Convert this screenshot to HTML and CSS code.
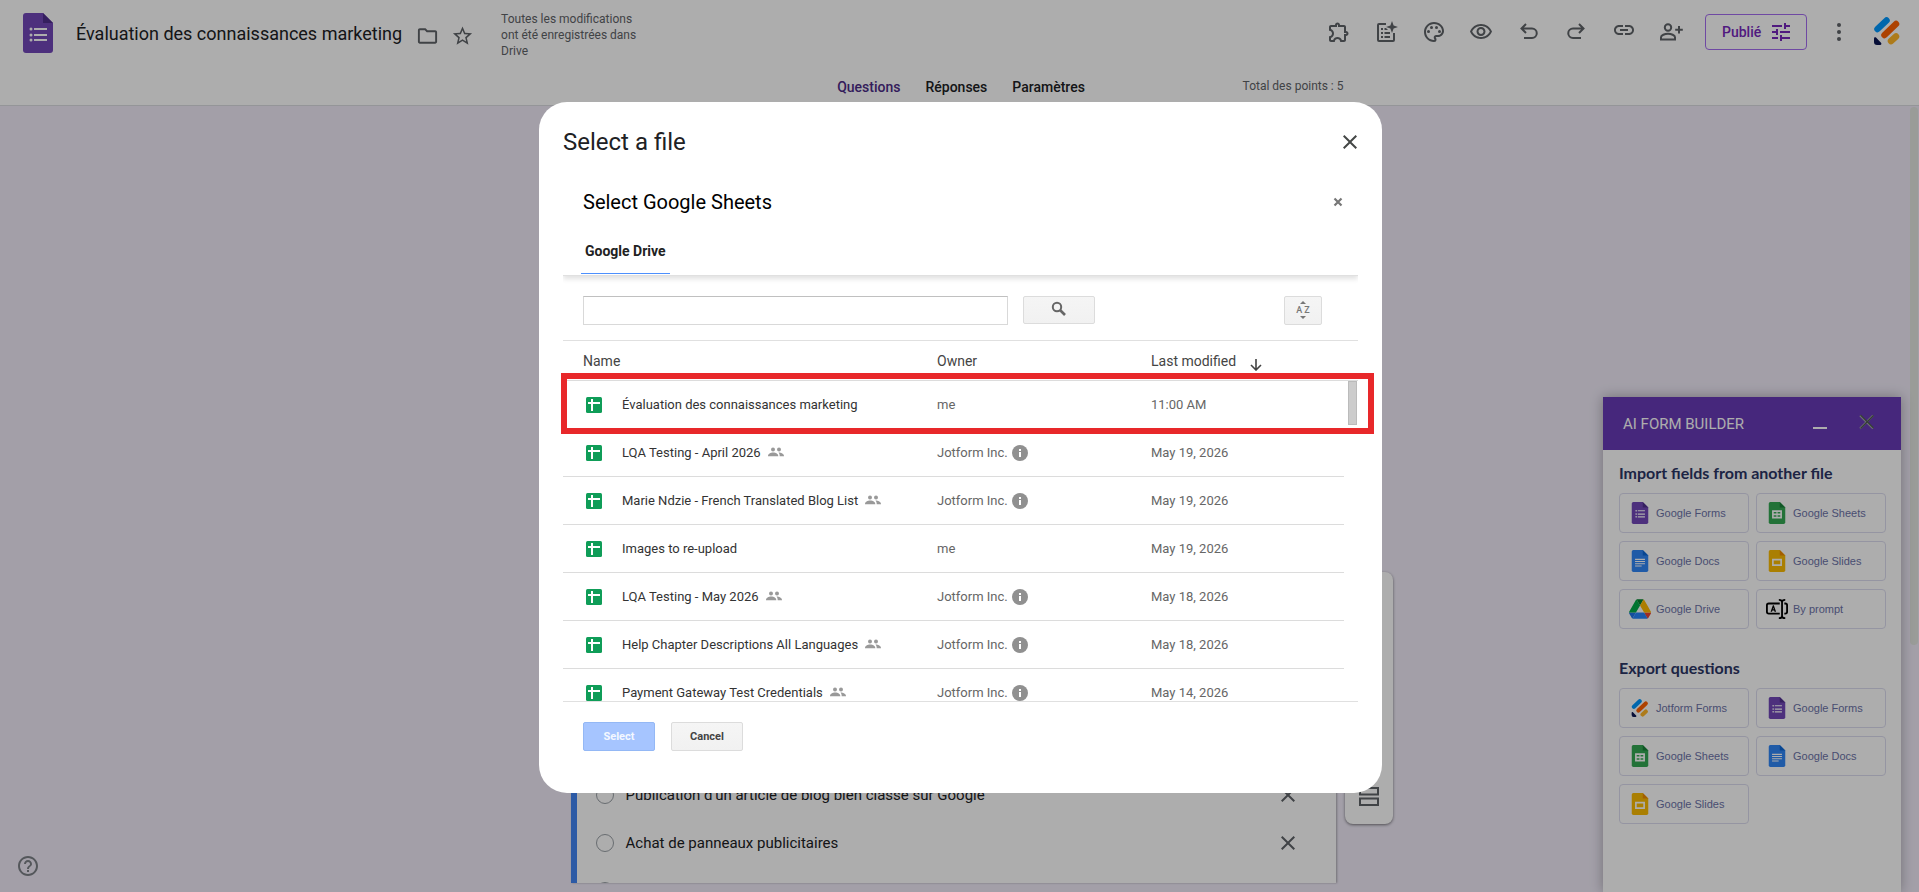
FILE: index.html
```html
<!DOCTYPE html>
<html lang="fr">
<head>
<meta charset="utf-8">
<title>Évaluation des connaissances marketing</title>
<link rel="stylesheet" href="styles.css">
</head>
<body>
<svg class="defs" aria-hidden="true">
  <symbol id="close" viewBox="0 0 24 24"><path d="M19 6.41 17.59 5 12 10.59 6.41 5 5 6.41 10.59 12 5 17.59 6.41 19 12 13.41 17.59 19 19 17.59 13.41 12z"/></symbol>
  <symbol id="forms" viewBox="0 0 30 40"><path fill="#7248b9" d="M3 0h17l10 10v27a3 3 0 0 1-3 3H3a3 3 0 0 1-3-3V3a3 3 0 0 1 3-3z"/><path fill="#4f2f8c" d="M20 0l10 10H20z"/><path fill="#fff" d="M11 15h13v2H11zM11 21h13v2H11zM11 26h13v2H11z"/><circle cx="8" cy="16" r="1.5" fill="#fff"/><circle cx="8" cy="22" r="1.5" fill="#fff"/><circle cx="8" cy="27" r="1.5" fill="#fff"/></symbol>
  <symbol id="sheets" viewBox="0 0 30 40"><path fill="#34a853" d="M3 0h17l10 10v27a3 3 0 0 1-3 3H3a3 3 0 0 1-3-3V3a3 3 0 0 1 3-3z"/><path fill="#188038" d="M20 0l10 10H20z"/><path fill="#fff" fill-rule="evenodd" d="M6 15h18v15H6zM9 18v3h5v-3zM16 18v3h5v-3zM9 24v3h5v-3zM16 24v3h5v-3z"/></symbol>
  <symbol id="docs" viewBox="0 0 30 40"><path fill="#3086f6" d="M3 0h17l10 10v27a3 3 0 0 1-3 3H3a3 3 0 0 1-3-3V3a3 3 0 0 1 3-3z"/><path fill="#0c67d6" d="M20 0l10 10H20z"/><path fill="#fff" d="M6 16h18v2H6zM6 20h18v2H6zM6 24h18v2H6zM6 28h12v2H6z"/></symbol>
  <symbol id="slides" viewBox="0 0 30 40"><path fill="#fbbc04" d="M3 0h17l10 10v27a3 3 0 0 1-3 3H3a3 3 0 0 1-3-3V3a3 3 0 0 1 3-3z"/><path fill="#f08c00" d="M20 0l10 10H20z"/><path fill="#fff" fill-rule="evenodd" d="M6 16h18v13H6zM9 19v7h12v-7z"/></symbol>
  <symbol id="drive" viewBox="0 0 87 78"><path fill="#1c74e9" d="M6.6 66.9l3.9 6.6c.8 1.4 2 2.5 3.3 3.3L27.5 53H0c0 1.6.4 3.1 1.2 4.5z"/><path fill="#00ac47" d="M43.7 25L29.9 1.200c-1.300.8-2.500 1.900-3.300 3.300L1.200 48.500C.4 49.900 0 51.500 0 53h27.500z"/><path fill="#ea4335" d="M73.600 76.800c1.300-.8 2.500-1.900 3.300-3.300l9.200-16c.8-1.400 1.200-2.900 1.200-4.500H59.800l5.900 11.500z"/><path fill="#00832d" d="M43.700 25L57.400 1.200C56.100.4 54.500 0 52.900 0H34.400c-1.600 0-3.200.4-4.500 1.200z"/><path fill="#2684fc" d="M59.800 53H27.500L13.800 76.800c1.300.8 2.900 1.200 4.500 1.200h50.800c1.600 0 3.200-.4 4.500-1.200z"/><path fill="#ffba00" d="M73.400 26.500L60.700 4.500c-.8-1.400-2-2.500-3.300-3.300L43.700 25l16.100 28h27.500c0-1.500-.4-3.100-1.200-4.500z"/></symbol>
  <symbol id="jotform" viewBox="0 0 26 28"><g fill="none" stroke-width="6.500" stroke-linecap="round"><path stroke="#0099ff" d="M3.500 12L12.500 3.500"/><path stroke="#ff6100" d="M10.500 18L22 7"/><path stroke="#ffb629" d="M17 24L22 19.500"/></g><path fill="#0a1551" d="M0 21.500c0-1.300 1.300-1.600 2-.9l5 5.200c.8.900.3 2.200-.8 2.200H3a3 3 0 0 1-3-3z"/></symbol>
  <symbol id="prompt" viewBox="0 0 24 22"><g fill="none" stroke="#000" stroke-width="2"><path d="M15 5H3a2 2 0 0 0-2 2v7a2 2 0 0 0 2 2h12M20 5h1a2 2 0 0 1 2 2v7a2 2 0 0 1-2 2h-1M17.500 3v16M14 1c2 0 3.500.7 3.500 2.500C17.500 1.700 19 1 21 1M14 21c2 0 3.500-.7 3.500-2.500 0 1.800 1.500 2.500 3.500 2.500"/></g><path d="M5 14l2.500-7h1L11 14H9.300l-.4-1.300H7L6.600 14zM7.500 11.200h1L8 9.500z"/></symbol>
  <symbol id="sheetfile" viewBox="0 0 16 16"><rect width="16" height="16" rx="1.500" fill="#0f9d58"/><path fill="#fff" d="M5 2h2v3h7v2H7v7H5V7H2V5h3z"/></symbol>
  <symbol id="people" viewBox="0 0 16 10"><circle cx="5" cy="2.500" r="2" /><circle cx="11" cy="2.500" r="2"/><path d="M0 9c0-2 2.500-3.500 5.200-3.500S10.300 7 10.300 9v.3H0zM10.500 5.600c2.700 0 5.500 1.300 5.500 3.400v.3h-4.300c0-1.600-.3-2.700-1.200-3.700z"/></symbol>
  <symbol id="info" viewBox="0 0 16 16"><circle cx="8" cy="8" r="8"/><path fill="#fff" d="M7 4h2v2H7zM7 7h2v5H7z"/></symbol>
</svg>

<header class="topbar">
  <div class="bar">
    <svg class="doc-icon"><use href="#forms"/></svg>
    <h1 class="doc-title">Évaluation des connaissances marketing</h1>
    <div class="doc-actions">
      <button class="icon-btn" aria-label="Déplacer"><svg viewBox="0 0 24 24"><path d="M9.170 6l2 2H20v10H4V6h5.170M10 4H4c-1.100 0-1.990.9-1.990 2L2 18c0 1.100.9 2 2 2h16c1.100 0 2-.9 2-2V8c0-1.100-.9-2-2-2h-8l-2-2z"/></svg></button>
      <button class="icon-btn" aria-label="Suivi"><svg viewBox="0 0 24 24"><path d="M22 9.240l-7.190-.62L12 2 9.190 8.630 2 9.240l5.460 4.730L5.820 21 12 17.270 18.180 21l-1.630-7.030L22 9.240zM12 15.400l-3.760 2.270 1-4.280-3.320-2.880 4.380-.38L12 6.100l1.710 4.040 4.380.38-3.320 2.880 1 4.280L12 15.400z"/></svg></button>
    </div>
    <p class="saved">Toutes les modifications ont été enregistrées dans Drive</p>
    <div class="tools">
      <button class="icon-btn" aria-label="Modules"><svg viewBox="0 0 24 24"><path d="M10.500 4.500c.28 0 .5.22.5.5v2h6v6h2c.28 0 .5.22.5.5s-.22.5-.5.5h-2v6h-2.120c-.68-1.750-2.390-3-4.380-3s-3.700 1.250-4.380 3H4v-2.120c1.750-.68 3-2.390 3-4.380 0-1.990-1.240-3.700-2.990-4.380L4 7h6V5c0-.28.22-.5.5-.5m0-2C9.120 2.500 8 3.620 8 5H4c-1.100 0-1.990.9-1.990 2v3.800h.29c1.490 0 2.700 1.210 2.700 2.700s-1.210 2.700-2.700 2.700H2V20c0 1.100.9 2 2 2h3.800v-.3c0-1.490 1.210-2.700 2.700-2.700s2.700 1.210 2.700 2.700v.3H17c1.100 0 2-.9 2-2v-4c1.380 0 2.500-1.120 2.500-2.500S20.380 11 19 11V7c0-1.100-.9-2-2-2h-4c0-1.380-1.120-2.500-2.500-2.500z"/></svg></button>
      <button class="icon-btn" aria-label="Améliorer"><svg viewBox="0 0 24 24"><path d="M12 3v2H5v15h14v-7h2v7a2 2 0 0 1-2 2H5a2 2 0 0 1-2-2V5a2 2 0 0 1 2-2zM18 1l1.600 4.400L24 7l-4.400 1.600L18 13l-1.600-4.400L12 7l4.400-1.600zM7 8h2v2H7zM7 12h2v2H7zM7 16h2v2H7zM10.500 8H12l2 2h-3.500zM10.500 12H16v2h-5.500zM10.500 16H16v2h-5.500z"/></svg></button>
      <button class="icon-btn" aria-label="Thème"><svg viewBox="0 0 24 24"><path d="M12 22C6.490 22 2 17.510 2 12S6.490 2 12 2s10 4.040 10 9c0 3.310-2.690 6-6 6h-1.770c-.28 0-.5.22-.5.5 0 .12.05.23.13.33.41.47.64 1.060.64 1.670A2.500 2.500 0 0 1 12 22zm0-18c-4.410 0-8 3.590-8 8s3.590 8 8 8c.28 0 .5-.22.5-.5a.54.54 0 0 0-.14-.35c-.41-.46-.63-1.050-.63-1.650a2.500 2.500 0 0 1 2.500-2.500H16c2.210 0 4-1.790 4-4 0-3.860-3.590-7-8-7z"/><circle cx="6.500" cy="11.500" r="1.500"/><circle cx="9.500" cy="7.500" r="1.500"/><circle cx="14.500" cy="7.500" r="1.500"/><circle cx="17.500" cy="11.500" r="1.500"/></svg></button>
      <button class="icon-btn" aria-label="Aperçu"><svg viewBox="0 0 24 24"><path d="M12 6c3.790 0 7.170 2.130 8.820 5.500C19.170 14.870 15.790 17 12 17s-7.170-2.130-8.820-5.500C4.830 8.130 8.210 6 12 6m0-2C7 4 2.730 7.110 1 11.500 2.730 15.890 7 19 12 19s9.270-3.110 11-7.500C21.270 7.110 17 4 12 4zm0 5a2.500 2.500 0 0 1 0 5 2.500 2.500 0 0 1 0-5m0-2c-2.480 0-4.500 2.020-4.500 4.500S9.520 16 12 16s4.500-2.020 4.500-4.500S14.480 7 12 7z"/></svg></button>
      <button class="icon-btn" aria-label="Annuler"><svg viewBox="0 0 24 24" class="line"><path d="M9 4L4.500 8.500 9 13M4.500 8.500H15a4.700 4.700 0 0 1 0 9.500H7"/></svg></button>
      <button class="icon-btn" aria-label="Rétablir"><svg viewBox="0 0 24 24" class="line"><path d="M15 4l4.500 4.500L15 13M19.500 8.500H9A4.700 4.700 0 0 0 9 18h8"/></svg></button>
      <button class="icon-btn" aria-label="Copier le lien"><svg viewBox="0 0 24 24"><path d="M3.900 10c0-1.710 1.390-3.100 3.100-3.100h4V5H7c-2.760 0-5 2.240-5 5s2.240 5 5 5h4v-1.900H7c-1.710 0-3.100-1.390-3.100-3.100zM8 11h8V9H8v2zm9-6h-4v1.900h4c1.710 0 3.100 1.390 3.100 3.100s-1.390 3.100-3.100 3.100h-4V15h4c2.760 0 5-2.240 5-5s-2.240-5-5-5z"/></svg></button>
      <button class="icon-btn" aria-label="Partager"><svg viewBox="0 0 24 24" class="line"><circle cx="9" cy="7.500" r="3.200"/><path d="M2 19.500v-2.200c0-2.200 3.800-3.500 7-3.500s7 1.300 7 3.500v2.200zM20 6v7.500M16.200 9.700h7.600"/></svg></button>
    </div>
    <button class="publish">Publié
      <svg viewBox="0 0 24 24"><path d="M3 17v2h6v-2H3zM3 5v2h10V5H3zm10 16v-2h8v-2h-8v-2h-2v6h2zM7 9v2H3v2h4v2h2V9H7zm14 4v-2H11v2h10zm-6-4h2V7h4V5h-4V3h-2v6z"/></svg>
    </button>
    <button class="icon-btn more" aria-label="Plus"><svg viewBox="0 0 24 24"><circle cx="12" cy="5" r="2"/><circle cx="12" cy="12" r="2"/><circle cx="12" cy="19" r="2"/></svg></button>
    <svg class="avatar"><use href="#jotform"/></svg>
  </div>
  <div class="subbar">
    <nav class="tabs"><a href="#q" class="active">Questions</a><a href="#r">Réponses</a><a href="#p">Paramètres</a></nav>
    <span class="points">Total des points : 5</span>
  </div>
</header>

<main class="canvas">
  <section class="card">
    <div class="option"><input type="radio" id="o1" name="o"><label for="o1">Publication d'un article de blog bien classé sur Google</label><button class="icon-btn" aria-label="Supprimer"><svg><use href="#close"/></svg></button></div>
    <div class="option"><input type="radio" id="o2" name="o"><label for="o2">Achat de panneaux publicitaires</label><button class="icon-btn" aria-label="Supprimer"><svg><use href="#close"/></svg></button></div>
    <div class="option"><input type="radio" id="o3" name="o" aria-label="Option"></div>
  </section>
  <aside class="side-tools"><button class="icon-btn" aria-label="Ajouter une section"><svg viewBox="0 0 24 24" class="line"><path d="M3 3h18v6.500H3zM3 13.500h18V20H3z"/></svg></button></aside>
</main>
<div class="page-scroll"></div>
<button class="icon-btn help" aria-label="Aide"><svg viewBox="0 0 24 24"><path d="M11 18h2v-2h-2v2zm1-16C6.480 2 2 6.480 2 12s4.480 10 10 10 10-4.480 10-10S17.520 2 12 2zm0 18c-4.410 0-8-3.590-8-8s3.590-8 8-8 8 3.590 8 8-3.590 8-8 8zm0-14c-2.210 0-4 1.790-4 4h2c0-1.100.9-2 2-2s2 .9 2 2c0 2-3 1.750-3 5h2c0-2.250 3-2.500 3-5 0-2.210-1.790-4-4-4z"/></svg></button>

<aside class="panel">
  <div class="panel-head"><h2>AI FORM BUILDER</h2><button class="minimize" aria-label="Réduire"></button><button class="icon-btn panel-close" aria-label="Fermer"><svg viewBox="0 0 22 22"><path d="M4 4.500l13 13M17 4.500l-13 13" stroke="#a8a8b0" stroke-width="1.800"/><path d="M4.500 4l13 13M17.500 4.500l-13 13" stroke="#4d5a50" stroke-width="1.200"/></svg></button></div>
  <h3>Import fields from another file</h3>
  <div class="choices">
    <button><svg><use href="#forms"/></svg>Google Forms</button>
    <button><svg><use href="#sheets"/></svg>Google Sheets</button>
    <button><svg><use href="#docs"/></svg>Google Docs</button>
    <button><svg><use href="#slides"/></svg>Google Slides</button>
    <button><svg><use href="#drive"/></svg>Google Drive</button>
    <button><svg><use href="#prompt"/></svg>By prompt</button>
  </div>
  <h3>Export questions</h3>
  <div class="choices">
    <button><svg class="small"><use href="#jotform"/></svg>Jotform Forms</button>
    <button><svg><use href="#forms"/></svg>Google Forms</button>
    <button><svg><use href="#sheets"/></svg>Google Sheets</button>
    <button><svg><use href="#docs"/></svg>Google Docs</button>
    <button><svg><use href="#slides"/></svg>Google Slides</button>
  </div>
</aside>

<div class="overlay">
  <div class="modal" role="dialog" aria-labelledby="dlg" lang="en">
    <div class="modal-head"><h2 id="dlg">Select a file</h2><button class="icon-btn" aria-label="Close"><svg><use href="#close"/></svg></button></div>
    <div class="picker-head"><h3>Select Google Sheets</h3><button class="icon-btn mini" aria-label="Close picker"><svg viewBox="0 0 10 10"><path d="M1.500 1.500l7 7M8.500 1.500l-7 7" stroke="#777" stroke-width="2.200"/></svg></button></div>
    <nav class="picker-tabs"><a href="#drive-tab">Google Drive</a></nav>
    <div class="search">
      <input type="text" aria-label="Search">
      <button class="btn go" aria-label="Search files"><svg viewBox="0 0 16 16"><circle cx="6" cy="6" r="4.200" fill="none" stroke="#666" stroke-width="2"/><path d="M9 9l5 5" stroke="#666" stroke-width="2.600"/></svg></button>
      <button class="btn sort" aria-label="Sort options"><i class="up"></i><span class="az"><span>A</span><span>Z</span></span><i class="down"></i></button>
    </div>
    <div class="files">
      <div class="clip">
        <table>
          <thead><tr><th class="c-name">Name</th><th class="c-owner">Owner</th><th><span class="sorted">Last modified <svg viewBox="0 0 12 12"><path d="M6 0v11M1 6l5 5 5-5" fill="none" stroke="#444" stroke-width="1.600"/></svg></span></th></tr></thead>
          <tbody>
            <tr><td><span class="file"><svg class="fi"><use href="#sheetfile"/></svg>Évaluation des connaissances marketing</span></td><td>me</td><td>11:00 AM</td></tr>
            <tr><td><span class="file"><svg class="fi"><use href="#sheetfile"/></svg>LQA Testing - April 2026<svg class="shared"><use href="#people"/></svg></span></td><td><span class="owner">Jotform Inc.<svg><use href="#info"/></svg></span></td><td>May 19, 2026</td></tr>
            <tr><td><span class="file"><svg class="fi"><use href="#sheetfile"/></svg>Marie Ndzie - French Translated Blog List<svg class="shared"><use href="#people"/></svg></span></td><td><span class="owner">Jotform Inc.<svg><use href="#info"/></svg></span></td><td>May 19, 2026</td></tr>
            <tr><td><span class="file"><svg class="fi"><use href="#sheetfile"/></svg>Images to re-upload</span></td><td>me</td><td>May 19, 2026</td></tr>
            <tr><td><span class="file"><svg class="fi"><use href="#sheetfile"/></svg>LQA Testing - May 2026<svg class="shared"><use href="#people"/></svg></span></td><td><span class="owner">Jotform Inc.<svg><use href="#info"/></svg></span></td><td>May 18, 2026</td></tr>
            <tr><td><span class="file"><svg class="fi"><use href="#sheetfile"/></svg>Help Chapter Descriptions All Languages<svg class="shared"><use href="#people"/></svg></span></td><td><span class="owner">Jotform Inc.<svg><use href="#info"/></svg></span></td><td>May 18, 2026</td></tr>
            <tr><td><span class="file"><svg class="fi"><use href="#sheetfile"/></svg>Payment Gateway Test Credentials<svg class="shared"><use href="#people"/></svg></span></td><td><span class="owner">Jotform Inc.<svg><use href="#info"/></svg></span></td><td>May 14, 2026</td></tr>
          </tbody>
        </table>
        <div class="track"><div class="thumb"></div></div>
      </div>
      <div class="highlight"></div>
    </div>
    <div class="actions"><button class="btn primary" disabled>Select</button><button class="btn cancel">Cancel</button></div>
  </div>
</div>
</body>
</html>
```

FILE: styles.css
```css
* { box-sizing: border-box; }
body { margin: 0; height: 100vh; overflow: hidden; display: flex; flex-direction: column; background: #f0ebf8; font-family: Roboto, Arial, sans-serif; color: #202124; }
h1, h2, h3, p { margin: 0; font-weight: 400; }
a { text-decoration: none; color: inherit; }
button { font-family: inherit; cursor: pointer; }
.defs { position: absolute; width: 0; height: 0; }
.icon-btn { display: flex; align-items: center; justify-content: center; flex: none; padding: 0; border: 0; background: none; color: #5f6368; }
.icon-btn svg { width: 24px; height: 24px; fill: currentColor; }
.icon-btn svg.line { fill: none; stroke: currentColor; stroke-width: 2; }

/* Top bar */
.topbar { flex: none; background: #fff; border-bottom: 1px solid #dadce0; }
.bar { display: flex; align-items: center; height: 66px; padding: 0 19px 0 23px; }
.doc-icon { width: 30px; height: 40px; margin-right: 23px; }
.doc-title { font-size: 18px; line-height: 24px; padding-top: 2px; }
.doc-actions { display: flex; gap: 12px; margin-left: 14px; padding-top: 5px; }
.doc-actions svg { width: 23px; height: 24px; }
.saved { width: 150px; margin: 4px 0 0 27px; font-size: 12px; line-height: 16px; color: #5f6368; }
.tools { display: flex; justify-content: space-between; width: 356px; margin: 0 22px 2px auto; }
.publish { display: flex; align-items: center; gap: 8px; width: 102px; height: 36px; margin-bottom: 2px; padding: 0 12px 0 16px; border: 1px solid #a46cf0; border-radius: 4px; background: #fff; font-size: 14px; font-weight: 500; color: #7627bb; white-space: nowrap; }
.publish svg { width: 24px; height: 24px; flex: none; fill: #7627bb; }
.more { margin: 0 23px 2px 20px; }
.avatar { width: 26px; height: 28px; margin-bottom: 4px; flex: none; }
.subbar { display: grid; grid-template-columns: 1fr auto 1fr; align-items: center; width: 768px; height: 39px; margin: 0 auto; }
.tabs { grid-column: 2; display: flex; gap: 25px; padding: 3px 0 0 3px; font-size: 14px; font-weight: 500; }
.tabs .active { color: #4c2b87; }
.points { justify-self: end; font-size: 12px; color: #5f6368; }

/* Form canvas */
.canvas { flex: 1; display: flex; align-items: flex-end; justify-content: center; gap: 9px; min-height: 0; padding: 0 0 9px 44px; }
.card { display: flex; flex-direction: column; justify-content: flex-start; width: 765px; height: 112px; overflow: hidden; background: #fff; border-left: 6px solid #4285f4; box-shadow: 1px 0 2px rgba(0, 0, 0, .3); }
.option { flex: none; display: flex; align-items: center; gap: 12px; height: 48px; padding: 0 36px 0 19px; font-size: 15px; }
.option input { appearance: none; width: 18px; height: 18px; margin: 0; border: 1px solid #9aa0a6; border-radius: 50%; }
.option label { flex: 1; }
.side-tools { display: flex; flex-direction: column; justify-content: flex-end; align-items: center; width: 48px; height: 252px; margin-bottom: 59px; padding-bottom: 15px; background: #fff; border-radius: 8px; box-shadow: 0 1px 3px rgba(0, 0, 0, .5); }
.page-scroll { position: absolute; top: 107px; right: 1px; width: 8px; height: 538px; border-radius: 4px; background: #e3e6e1; }
.help { position: absolute; left: 16px; bottom: 14px; color: #7d8187; }

/* Add-on panel */
.panel { position: absolute; top: 397px; right: 18px; bottom: 0; width: 298px; background: #fff; box-shadow: 0 0 12px rgba(0, 0, 0, .3); }
.panel-head { display: flex; align-items: center; height: 53px; padding: 0 23px 0 20px; background: #673ab7; color: #fff; }
.panel-head h2 { flex: 1; font-size: 15px; }
.minimize { width: 14px; height: 2px; margin: 8px 29px 0 0; padding: 0; border: 0; background: #fff; }
.panel-close svg { width: 22px; height: 22px; margin-bottom: 4px; }
.panel h3 { padding: 11px 16px 8px; font-family: Lato, sans-serif; font-size: 16px; line-height: 24px; font-weight: 700; color: #2b3565; }
.choices { display: grid; grid-template-columns: 1fr 1fr; gap: 8px 7px; padding: 0 15px 16px 16px; }
.choices button { display: flex; align-items: center; gap: 5px; height: 40px; padding: 0 0 0 9px; border: 1px solid #dcdcef; border-radius: 4px; background: #fff; font-family: "Liberation Sans", Arial, sans-serif; font-size: 11px; color: #6c73a8; white-space: nowrap; }
.choices svg { width: 22px; height: 22px; }
.choices .small { height: 18px; }

/* File picker dialog */
.overlay { position: fixed; inset: 0; display: grid; place-items: center; padding: 3px 0 0 2px; background: rgba(0, 0, 0, .32); }
.modal { width: 843px; max-width: 95vw; padding: 24px 24px 42px; background: #fff; border-radius: 28px; }
.modal-head { display: flex; justify-content: space-between; align-items: center; height: 32px; }
.modal-head h2 { font-size: 24px; line-height: 32px; }
.modal-head .icon-btn { color: #444746; margin-right: -4px; }
.picker-head { display: flex; justify-content: space-between; align-items: center; height: 44px; margin-top: 22px; padding: 0 15px 0 20px; color: #000; }
.picker-head h3 { font-size: 20px; }
.mini svg { width: 10px; height: 10px; }
.picker-tabs { display: flex; align-items: stretch; height: 52px; padding: 0 18px 1px; border-bottom: 1px solid #e0e0e0; box-shadow: 0 3px 5px rgba(0, 0, 0, .12); clip-path: inset(0 0 -10px 0); }
.picker-tabs a { display: flex; align-items: center; padding: 4px 4px 0; border-bottom: 1px solid #4d90fe; font-size: 14px; font-weight: 700; color: #222; }
.search { display: flex; height: 65px; align-items: center; padding: 4px 36px 0 20px; border-bottom: 1px solid #e0e0e0; }
.search input { width: 425px; height: 29px; margin: 0; padding: 0 8px; border: 1px solid #d9d9d9; border-top-color: #c0c0c0; font: 13px Roboto, sans-serif; }
.btn { height: 29px; border: 1px solid #dcdcdc; border-radius: 2px; padding: 0; background: linear-gradient(#f5f5f5, #f1f1f1); font-size: 11px; font-weight: 700; color: #444; }
.go { display: flex; align-items: center; justify-content: center; width: 72px; height: 28px; margin-left: 15px; }
.go svg { width: 16px; height: 16px; margin-bottom: 2px; }
.sort { display: flex; flex-direction: column; align-items: center; justify-content: center; gap: 1px; width: 38px; margin-left: auto; }
.az { display: flex; gap: 2px; font-size: 9px; line-height: 10px; font-weight: 500; color: #777; }
.up, .down { border: 3px solid transparent; }
.up { border-top: 0; border-bottom-color: #777; }
.down { border-bottom: 0; border-top-color: #777; }
.files { position: relative; }
.clip { display: flex; height: 361px; overflow: hidden; border-bottom: 1px solid #e0e0e0; }
table { flex: 1; align-self: flex-start; table-layout: fixed; border-collapse: separate; border-spacing: 0; font-size: 13px; color: #666; }
th, td { padding: 0; text-align: left; border-bottom: 1px solid #dcdcdc; }
th { height: 40px; font-size: 14px; font-weight: 400; color: #444; }
.c-name { width: 374px; padding-left: 20px; }
.c-owner { width: 214px; }
.sorted { display: flex; align-items: center; gap: 14px; }
.sorted svg { width: 12px; height: 12px; margin-top: 8px; }
td { height: 48px; }
.file { display: flex; align-items: center; padding-left: 23px; color: #333; white-space: nowrap; }
.fi { width: 16px; height: 16px; margin-right: 20px; }
.shared { width: 16px; height: 10px; margin: 0 0 2px 7px; fill: #999; }
.owner { display: flex; align-items: center; gap: 4px; }
.owner svg { width: 16px; height: 16px; fill: #909090; }
.track { flex: none; width: 14px; margin-top: 39px; padding: 0 1px 0 4px; border-top: 1px solid #dcdcdc; }
.thumb { height: 44px; background: #ccc; border: 1px solid #bbb; }
.highlight { position: absolute; top: 32px; left: -2px; right: -16px; height: 61px; border: 6px solid #e8282a; }
.actions { display: flex; gap: 16px; padding: 20px 20px 0; }
.actions .btn { width: 72px; }
.actions .primary { background: #a6c5ff; border-color: #94b8f5; color: #f4f8ff; }
```
